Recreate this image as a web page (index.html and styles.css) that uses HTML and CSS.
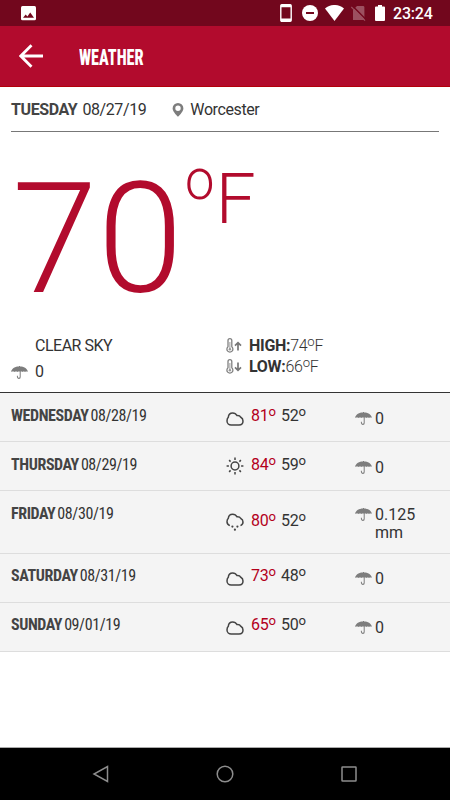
FILE: index.html
```html
<!DOCTYPE html>
<html lang="en">
<head>
  <meta charset="UTF-8" />
  <meta name="viewport" content="width=device-width, initial-scale=1.0" />
  <title>Weather</title>
  <link rel="stylesheet" href="styles.css">
</head>
<body>

  <!-- Shared icons -->
  <svg class="sprite" width="0" height="0">
    <symbol id="umbrella" viewBox="0 0 17 13">
      <path d="M0 5.800C1 2.200 4.200.7 8 .6V0h1v.6c3.800.1 7 1.600 8 5.200-1.200-.5-2-.5-3 .1-1-.6-1.700-.6-2.600 0-.7-.4-1.200-.4-1.700-.3v5.300a1.900 1.900 0 0 1-3.800.2V9.800h1v1a.9.900 0 0 0 1.800 0V5.600c-.8-.2-1.600-.1-2.400.3-.8-.6-1.700-.6-2.600 0-1-.6-2-.6-3.700-.1z" fill="#7d7d7d"/>
    </symbol>
    <symbol id="cloud" viewBox="0 0 18 14">
      <path d="M5.200 13C3 13 1 11.300 1 9c0-1.700.5-2.900 1.300-3.700C2.500 2.700 4.300 1 6.700 1c2 0 3.300.8 4.200 2.500 2-.2 3.200.4 3.900 1.800C16.300 6 17 7.200 17 9c0 2.400-1.700 4-4 4z" fill="none" stroke="#444" stroke-width="1.500"/>
    </symbol>
    <symbol id="rain" viewBox="0 0 18 18">
      <path d="M3.800 12.600C2 11.800 1 10.500 1 8.800c0-1.500.5-2.700 1.300-3.500C2.500 2.800 4.300 1.200 6.700 1.200c2 0 3.300.8 4.200 2.500 2-.2 3.200.4 3.900 1.800C16.300 6.200 17 7.400 17 9c0 1.600-.9 2.900-2.500 3.600" fill="none" stroke="#444" stroke-width="1.500"/>
      <g fill="#444"><circle cx="6.400" cy="13.600" r="1.100"/><circle cx="11.400" cy="13.600" r="1.100"/><circle cx="8.900" cy="16.700" r="1.100"/></g>
    </symbol>
    <symbol id="sun" viewBox="0 0 18 18">
      <g fill="none" stroke="#444" stroke-width="1.500"><circle cx="9" cy="9" r="3.900"/>
      <path d="M9 .6v2.300M9 15.100v2.300M.6 9h2.300M15.100 9h2.300M3.100 3.100l1.500 1.500M13.400 13.400l1.500 1.500M3.100 14.900l1.500-1.500M13.400 4.600l1.500-1.500"/></g>
    </symbol>
    <symbol id="thermo" viewBox="0 0 8 15">
      <path d="M2 8.800V2.600a1.900 1.900 0 0 1 3.800 0v6.200a3 3 0 1 1-3.800 0z" fill="none" stroke="#808080" stroke-width="1.300"/>
      <path d="M3.900 4v7" stroke="#999" stroke-width="1"/><circle cx="3.900" cy="11.300" r="1.200" fill="#999"/>
    </symbol>
    <symbol id="arrow" viewBox="0 0 8 10">
      <path d="M4 9.500V1.800M1 4.600l3-3 3 3" fill="none" stroke="#777" stroke-width="1.700"/>
    </symbol>
  </svg>

  <div class="status">
    <svg class="photo" width="15" height="15" viewBox="0 0 15 15"><rect width="15" height="14.200" rx="1.500" fill="#fff"/><path d="M2 11.800l2.700-3.400 1.700 2 2.800-4L13 11.800z" fill="#72071d"/></svg>
    <svg width="12" height="18" viewBox="0 0 12 18"><rect x=".8" y=".8" width="10.400" height="16.400" rx="1" fill="none" stroke="#fff" stroke-width="1.400"/><path d="M1 2h10M1 15.800h10" stroke="#fff" stroke-width="2.400"/></svg>
    <svg class="dnd" width="16" height="16" viewBox="0 0 16 16"><circle cx="8" cy="8" r="8" fill="#fff"/><rect x="4" y="7" width="8" height="2" fill="#72071d"/></svg>
    <svg class="wifi" width="19" height="16" viewBox="0 0 19 16"><path d="M0 3.500C5.500-1.200 13.500-1.200 19 3.500L9.500 16z" fill="#fff"/></svg>
    <svg class="sim" width="15" height="16" viewBox="0 0 15 16"><path d="M6 1h6q1.400 0 1.400 1.400V15H2V5z" fill="#9c5060"/><path d="M1.300.8L15 14.500" stroke="#72071d" stroke-width="1.500"/><path d="M.3 2L14 15.600" stroke="#9c5060" stroke-width="1.200"/></svg>
    <svg class="battery" width="10" height="16" viewBox="0 0 10 16"><path d="M3 0h4v1.500h2q1 0 1 1V15q0 1-1 1H1q-1 0-1-1V2.500q0-1 1-1h2z" fill="#fff"/></svg>
    <span class="clock">23:24</span>
  </div>

  <header class="toolbar">
    <svg width="24" height="24" viewBox="0 0 24 24"><path d="M24 12H2M12.500 1.300L1.800 12l10.700 10.700" fill="none" stroke="#fff" stroke-width="2.800"/></svg>
    <h1>WEATHER</h1>
  </header>

  <main>
    <div class="today">
      <b>TUESDAY</b><span class="date">08/27/19</span>
      <svg width="12" height="14" viewBox="0 0 12 14"><path fill-rule="evenodd" d="M6 0a5.400 5.400 0 0 1 5.400 5.400C11.400 8.700 6 13.700 6 13.700S.6 8.700.6 5.400A5.400 5.400 0 0 1 6 0zM6 2.500a2.700 2.700 0 1 0 0 5.400 2.700 2.700 0 0 0 0-5.400z" fill="#7d7d7d"/></svg>
      <span class="place">Worcester</span>
    </div>

    <div class="current"><span class="deg">70</span><span class="unit"><sup>o</sup>F</span></div>

    <div class="summary">
      <div class="sky">
        <div class="line"><i></i><span>CLEAR SKY</span></div>
        <div class="line"><i><svg width="17" height="13"><use href="#umbrella"/></svg></i><span>0</span></div>
      </div>
      <div class="range">
        <div class="line"><svg width="8" height="15"><use href="#thermo"/></svg><svg width="8" height="10"><use href="#arrow"/></svg><b>HIGH:</b><span>74<sup>o</sup>F</span></div>
        <div class="line"><svg width="8" height="15"><use href="#thermo"/></svg><svg class="down" width="8" height="10"><use href="#arrow"/></svg><b>LOW:</b><span>66<sup>o</sup>F</span></div>
      </div>
    </div>

    <div class="forecast">
      <div class="row">
        <div class="day"><b>WEDNESDAY</b>08/28/19</div>
        <div class="temp"><svg class="cloud" width="18" height="14"><use href="#cloud"/></svg><span class="max">81<sup>o</sup></span><span>52<sup>o</sup></span></div>
        <div class="wet"><svg width="17" height="13"><use href="#umbrella"/></svg><span>0</span></div>
      </div>
      <div class="row">
        <div class="day"><b>THURSDAY</b>08/29/19</div>
        <div class="temp"><svg width="18" height="18"><use href="#sun"/></svg><span class="max">84<sup>o</sup></span><span>59<sup>o</sup></span></div>
        <div class="wet"><svg width="17" height="13"><use href="#umbrella"/></svg><span>0</span></div>
      </div>
      <div class="row tall">
        <div class="day"><b>FRIDAY</b>08/30/19</div>
        <div class="temp"><svg width="18" height="18"><use href="#rain"/></svg><span class="max">80<sup>o</sup></span><span>52<sup>o</sup></span></div>
        <div class="wet"><svg width="17" height="13"><use href="#umbrella"/></svg><span>0.125 mm</span></div>
      </div>
      <div class="row late">
        <div class="day"><b>SATURDAY</b>08/31/19</div>
        <div class="temp"><svg class="cloud" width="18" height="14"><use href="#cloud"/></svg><span class="max">73<sup>o</sup></span><span>48<sup>o</sup></span></div>
        <div class="wet"><svg width="17" height="13"><use href="#umbrella"/></svg><span>0</span></div>
      </div>
      <div class="row late">
        <div class="day"><b>SUNDAY</b>09/01/19</div>
        <div class="temp"><svg class="cloud" width="18" height="14"><use href="#cloud"/></svg><span class="max">65<sup>o</sup></span><span>50<sup>o</sup></span></div>
        <div class="wet"><svg width="17" height="13"><use href="#umbrella"/></svg><span>0</span></div>
      </div>
    </div>
  </main>

  <nav class="navbar">
    <svg width="18" height="18" viewBox="0 0 18 18"><path d="M15.500 1.500v15L2 9z"/></svg>
    <svg width="18" height="18" viewBox="0 0 18 18"><circle cx="9" cy="9" r="7.800"/></svg>
    <svg width="18" height="18" viewBox="0 0 18 18"><rect x="2" y="2" width="14" height="14" rx=".5"/></svg>
  </nav>

</body>
</html>
```
FILE: styles.css
```css
* {
  box-sizing: border-box;
}

body {
  margin: 0;
  width: 450px;
  height: 800px;
  overflow: hidden;
  display: flex;
  flex-direction: column;
  background: #fff;
  color: #333;
  font-family: Roboto, sans-serif;
  font-size: 16px;
  line-height: 18px;
}

svg {
  display: block;
  flex: none;
}

sup {
  font-size: 0.82em;
  line-height: 0;
  vertical-align: 0.42em;
}

.sprite {
  position: absolute;
}

/* Status bar */
.status {
  flex: none;
  height: 26px;
  display: flex;
  align-items: center;
  background: #72071d;
  color: #fff;
}

.photo {
  margin: 0 244px 0 21px;
}

.dnd {
  margin-left: 10px;
}

.wifi {
  margin-left: 7px;
}

.sim {
  margin-left: 7px;
}

.battery {
  margin-left: 9px;
}

.clock {
  margin: 2px 0 0 8px;
  font-weight: 500;
  letter-spacing: -0.2px;
}

/* Toolbar */
.toolbar {
  flex: none;
  height: 61px;
  display: flex;
  align-items: center;
  padding-left: 19px;
  background: #b20b2d;
  border-bottom: 1px solid #b3000a;
}

.toolbar h1 {
  margin: 2px 0 0 36px;
  color: #fff;
  font-size: 22.5px;
  font-weight: 800;
  font-stretch: 75%;
  line-height: 24px;
  transform: scaleX(0.72);
  transform-origin: left;
}

main {
  flex: 1;
}

/* Today */
.today {
  display: flex;
  align-items: center;
  height: 45px;
  margin: 0 11px;
  padding-top: 2px;
  border-bottom: 1px solid #777;
  letter-spacing: -0.4px;
}

b {
  font-weight: 700;
  color: #444;
}

.date {
  margin: 0 26px 0 5px;
}

.place {
  margin-left: 6px;
}

.current {
  display: flex;
  align-items: flex-start;
  height: 199px;
  padding-left: 12px;
  color: #b20b2d;
  font-weight: 300;
}

.deg {
  margin-top: 28px;
  font-size: 154px;
  line-height: 160px;
}

.unit {
  margin: 27px 0 0 2px;
  font-size: 71px;
  line-height: 80px;
}

.unit sup {
  display: inline-block;
  width: 31px;
  transform: scaleX(0.9);
  transform-origin: left;
}

.summary {
  display: grid;
  grid-template-columns: 215px 1fr;
  height: 62px;
  padding-left: 11px;
  border-bottom: 1px solid #333;
}

.sky .line {
  display: flex;
  align-items: center;
  height: 26px;
}

.sky i {
  width: 24px;
}

.sky {
  padding-top: 2px;
  letter-spacing: -0.5px;
}

.range {
  padding-top: 4px;
}

.range .line {
  display: flex;
  align-items: center;
  height: 21px;
}

.range span {
  font-weight: 300;
  letter-spacing: -0.3px;
}

.range b {
  margin-left: 7px;
  color: #333;
  letter-spacing: -0.3px;
}

.down {
  transform: rotate(180deg);
}

/* Forecast */
.row {
  display: grid;
  grid-template-columns: 215px 129px 1fr;
  height: 49px;
  padding: 13px 0 0 11px;
  background: #f4f4f4;
  border-bottom: 1px solid #ddd;
}

.row.tall {
  height: 63px;
}

.row.late {
  padding-top: 12px;
}

.day {
  padding-top: 1px;
  font-stretch: 75%;
  letter-spacing: -0.4px;
}

.day b {
  margin-right: 2px;
}

.temp {
  display: flex;
  padding-top: 1px;
  letter-spacing: -0.3px;
}

.temp svg {
  margin: 1px 7px 0 0;
}

.temp .cloud {
  margin-top: 5px;
}

.max {
  width: 30px;
  color: #b3001b;
}

.tall .temp {
  padding-top: 8px;
}

.wet {
  display: flex;
  padding-top: 4px;
}

.wet svg {
  margin: 2px 3px 0 0;
}

.wet span {
  width: 45px;
}

.tall .wet {
  padding-top: 2px;
}

/* Android navigation */
.navbar {
  flex: none;
  height: 53px;
  display: flex;
  justify-content: space-between;
  align-items: center;
  padding: 0 92px;
  background: #000;
  border-top: 1px solid #aaa;
}

.navbar svg {
  fill: none;
  stroke: #8d8d8d;
  stroke-width: 1.5;
}
```
